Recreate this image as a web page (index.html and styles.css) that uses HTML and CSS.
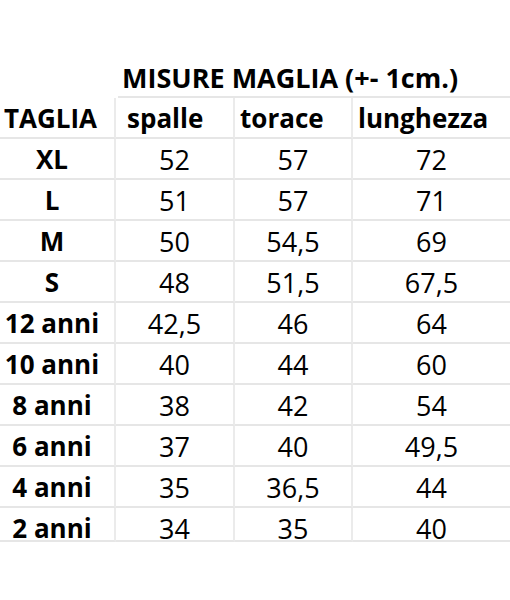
FILE: index.html
```html
<!DOCTYPE html>
<html lang="it">
<head>
<meta charset="utf-8">
<title>Misure maglia</title>
<link rel="stylesheet" href="styles.css">
</head>
<body>
<div class="sheet">
  <div class="cell blank"></div>
  <div class="cell title">MISURE MAGLIA (+- 1cm.)</div>

  <div class="cell head first">TAGLIA</div>
  <div class="cell head spalle">spalle</div>
  <div class="cell head">torace</div>
  <div class="cell head last">lunghezza</div>

  <div class="cell size">XL</div><div class="cell num">52</div><div class="cell num">57</div><div class="cell num last">72</div>
  <div class="cell size">L</div><div class="cell num">51</div><div class="cell num">57</div><div class="cell num last">71</div>
  <div class="cell size">M</div><div class="cell num">50</div><div class="cell num">54,5</div><div class="cell num last">69</div>
  <div class="cell size">S</div><div class="cell num">48</div><div class="cell num">51,5</div><div class="cell num last">67,5</div>
  <div class="cell size">12 anni</div><div class="cell num">42,5</div><div class="cell num">46</div><div class="cell num last">64</div>
  <div class="cell size">10 anni</div><div class="cell num">40</div><div class="cell num">44</div><div class="cell num last">60</div>
  <div class="cell size">8 anni</div><div class="cell num">38</div><div class="cell num">42</div><div class="cell num last">54</div>
  <div class="cell size">6 anni</div><div class="cell num">37</div><div class="cell num">40</div><div class="cell num last">49,5</div>
  <div class="cell size">4 anni</div><div class="cell num">35</div><div class="cell num">36,5</div><div class="cell num last">44</div>
  <div class="cell size end">2 anni</div><div class="cell num end">34</div><div class="cell num end">35</div><div class="cell num last end">40</div>
</div>
</body>
</html>
```

FILE: styles.css
```css
* {
  box-sizing: border-box;
}

html, body {
  margin: 0;
  padding: 0;
  background: #ffffff;
}

body {
  width: 510px;
  height: 600px;
  overflow: hidden;
  font-family: "Open Sans", "DejaVu Sans", sans-serif;
  color: #000000;
}

.sheet {
  margin-top: 57px;
  display: grid;
  grid-template-columns: 116px 119px 118px 157px;
  grid-auto-rows: 41px;
}

.cell {
  height: 41px;
  line-height: 41px;
  font-size: 26px;
  white-space: nowrap;
  border-bottom: 2px solid #e6e6e6;
  border-right: 2px solid #ebebeb;
}

.cell.last {
  border-right: none;
}

.blank {
  border: none;
}

.title {
  grid-column: 2 / 5;
  border-right: none;
  border-bottom-color: #e6e6e6;
  font-weight: 700;
  font-size: 27px;
  padding-left: 4px;
  margin-left: 2px;
}

.head {
  font-weight: 700;
  padding-left: 5px;
}

.head.first {
  padding-left: 4px;
}

.head.spalle {
  padding-left: 11px;
}

.size {
  font-weight: 700;
  text-align: center;
  padding-right: 10px;
}

.num {
  text-align: center;
  font-weight: 400;
  font-size: 27px;
}

.end {
  height: 34px;
}
```
